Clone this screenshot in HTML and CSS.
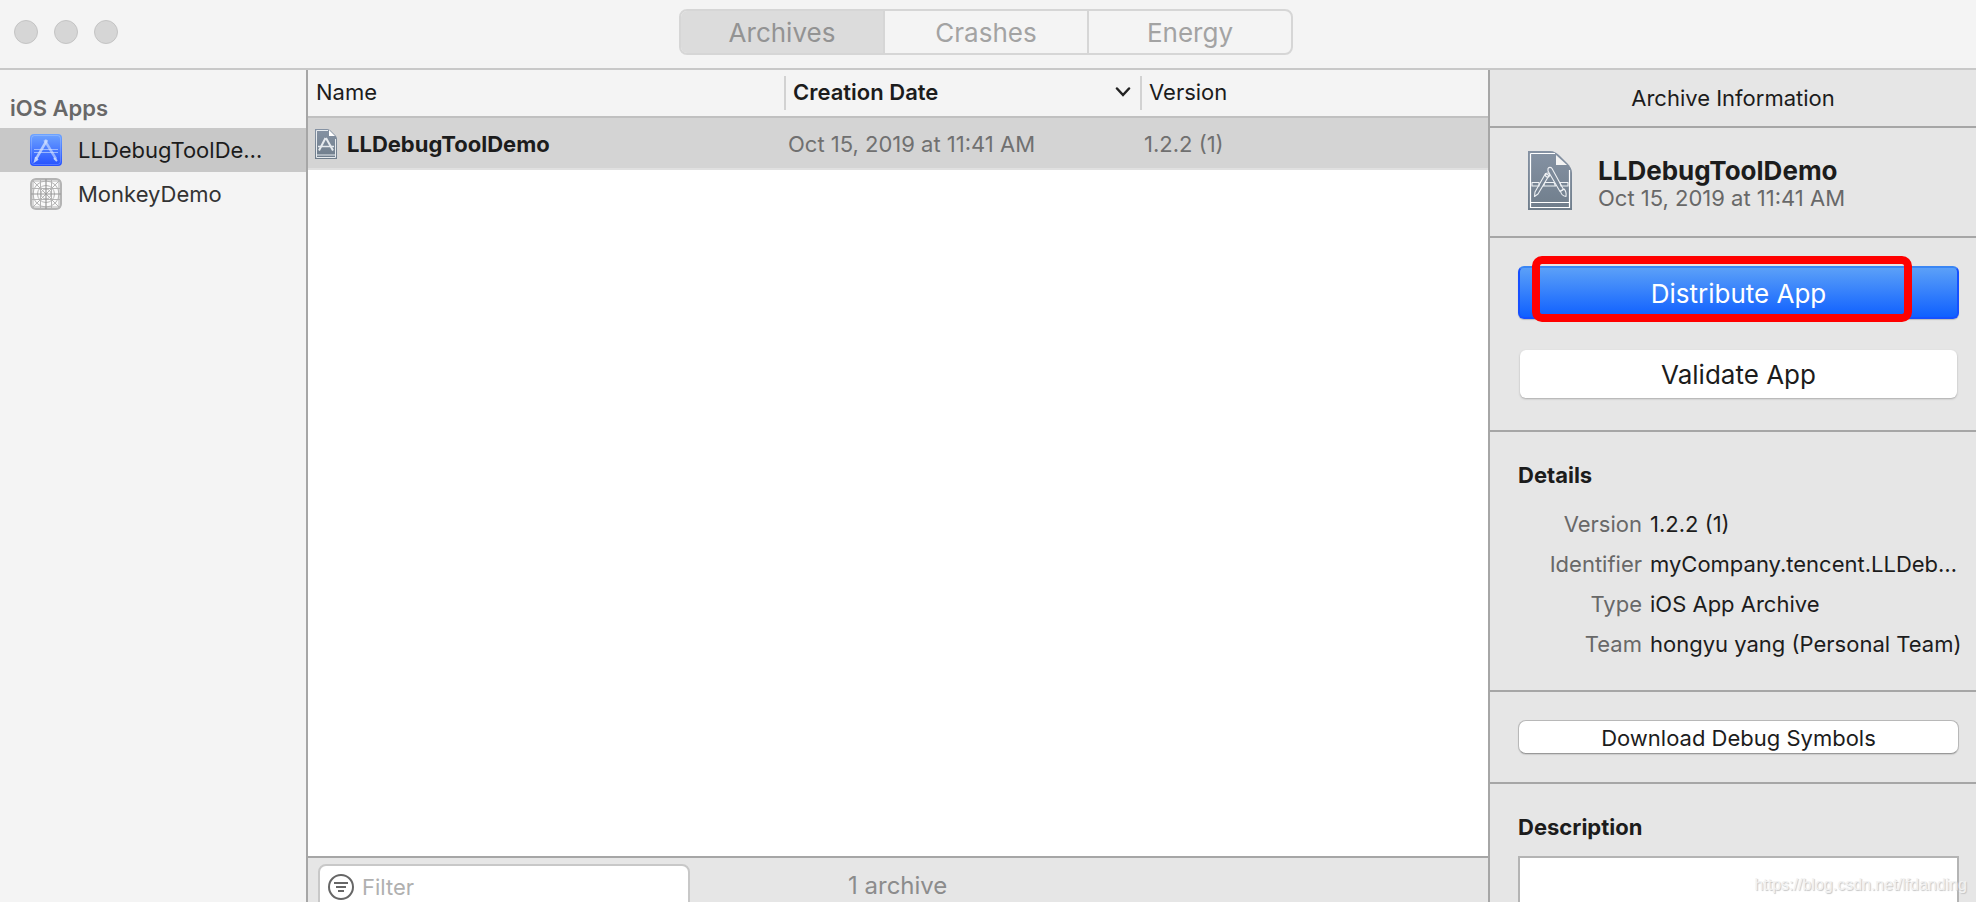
FILE: index.html
```html
<!DOCTYPE html>
<html lang="en">
<head>
    <meta charset="UTF-8">
    <meta name="viewport" content="width=device-width, initial-scale=1.0">
    <title>Archives</title>
    <link rel="stylesheet" href="styles.css">
</head>
<body>

    <!-- shared drawings -->
    <svg class="defs" width="0" height="0" aria-hidden="true">
        <defs>
            <linearGradient id="slate" x1="0" y1="0" x2="0" y2="1">
                <stop offset="0" stop-color="#8592a3"/>
                <stop offset="1" stop-color="#6f7d8b"/>
            </linearGradient>
            <linearGradient id="blue" x1="0" y1="0" x2="0" y2="1">
                <stop offset="0" stop-color="#6ea4ff"/>
                <stop offset="1" stop-color="#2450ff"/>
            </linearGradient>
            <symbol id="archive-doc" viewBox="0 0 44 59">
                <path d="M0 0h22c4 0 7 2 10 5l7 7c3 3 5 6 5 10v37H0z" fill="url(#slate)"/>
                <path d="M2.500 2.500H27M41.500 19v37.500h-39v-54M2.500 51.500h39" fill="none" stroke="#fff" stroke-width="1.200"/>
                <path d="M28 4v10h11z" fill="#f4f4f4"/>
                <g fill="none" stroke="#eef1f4" stroke-width="1.100" stroke-linejoin="round">
                    <path d="M4 31.500h7v3.500H4zM17 31.500h9l1.500 3.500h-12zM32 31.500h8v3.500h-7z"/>
                    <path d="M20 17.500c1-1.500 3-1.500 4 0l11.500 21-3.500 2L20 20z"/>
                    <path d="M17.500 22.500l3.500 2L10 43l-3.500 2.500L7 41z"/>
                    <path d="M32.500 40l3.500-2c2 2 2.500 4 2 7.500-3-.5-5-2-5.500-5.500z"/>
                    <circle cx="19.500" cy="24" r="2"/>
                </g>
            </symbol>
            <symbol id="archive-doc-small" viewBox="0 0 22 30">
                <path d="M0 0h12c2 0 3 1 4 2l4 4c1 1 2 2 2 4v20H0z" fill="url(#slate)"/>
                <path d="M1.500 1.500H13M20.500 10v18.500h-19v-27M1.500 26h19" fill="none" stroke="#e6eaee"/>
                <path d="M14 1v6h6z" fill="#fff"/>
                <g fill="none" stroke="#e6eaee">
                    <path d="M10.500 9L4 21.500M11 9l7 12.500" stroke-width="2"/>
                    <path d="M3 17.500h16" stroke-width="1.500"/>
                </g>
            </symbol>
        </defs>
    </svg>

    <header class="titlebar">
        <div class="lights"><span></span><span></span><span></span></div>
        <nav class="segmented">
            <button type="button" class="active">Archives</button>
            <button type="button">Crashes</button>
            <button type="button">Energy</button>
        </nav>
    </header>

    <div class="window">
        <aside class="sidebar">
            <h2>iOS Apps</h2>
            <ul>
                <li class="selected">
                    <svg width="32" height="32" viewBox="0 0 32 32">
                        <rect width="32" height="32" rx="4" fill="url(#blue)"/>
                        <rect x="1.500" y="1.500" width="29" height="29" rx="3" fill="none" stroke="#fff" stroke-opacity=".2"/>
                        <g fill="none" stroke="#d5e3ff">
                            <path d="M4 15.500h24M4 18.500h24" stroke-opacity=".6"/>
                            <path d="M17 6L6 25" stroke-width="2.500" stroke-opacity=".75"/>
                            <path d="M14.500 6L26 25" stroke-width="2.500" stroke-opacity=".6"/>
                            <path d="M6 23l-1 4 3-2M24 24l3 3" stroke-width="2" stroke-opacity=".8"/>
                        </g>
                    </svg>
                    <span>LLDebugToolDe…</span>
                </li>
                <li>
                    <svg width="32" height="32" viewBox="0 0 32 32">
                        <rect x="1" y="1" width="30" height="30" rx="5" fill="#fafafa" stroke="#b4b4b4" stroke-width="2"/>
                        <g fill="none" stroke="#b4b4b4">
                            <path d="M3 1v30M10.500 1v30M21.500 1v30M29 1v30M1 3h30M1 10.500h30M1 21.500h30M1 29h30"/>
                            <path d="M2 2l28 28M30 2L2 30"/>
                            <circle cx="16" cy="16" r="13"/>
                            <circle cx="16" cy="16" r="8.500"/>
                            <circle cx="16" cy="16" r="5"/>
                            <path d="M16 1v30M1 16h30" stroke="#999" stroke-width="1.200"/>
                        </g>
                    </svg>
                    <span>MonkeyDemo</span>
                </li>
            </ul>
        </aside>

        <main class="content">
            <div class="list">
                <table class="archives">
                    <colgroup>
                        <col class="col-name">
                        <col class="col-date">
                        <col>
                    </colgroup>
                    <thead>
                        <tr>
                            <th>Name</th>
                            <th class="sorted">
                                <div class="sort">
                                    Creation Date
                                    <svg width="16" height="10" viewBox="0 0 16 10"><path d="M2 1.500l6 6.500 6-6.500" fill="none" stroke="#222" stroke-width="2.500" stroke-linecap="round"/></svg>
                                </div>
                            </th>
                            <th>Version</th>
                        </tr>
                    </thead>
                    <tbody>
                        <tr>
                            <td>
                                <div class="name">
                                    <svg width="22" height="30"><use href="#archive-doc-small"/></svg>
                                    LLDebugToolDemo
                                </div>
                            </td>
                            <td>Oct 15, 2019 at 11:41 AM</td>
                            <td>1.2.2 (1)</td>
                        </tr>
                    </tbody>
                </table>
            </div>
            <footer class="bottom-bar">
                <label class="filter">
                    <svg width="26" height="26" viewBox="0 0 26 26"><g fill="none" stroke="#666" stroke-width="2"><circle cx="13" cy="13" r="12"/><path d="M6 9h14M8 13h10M10 17h6"/></g></svg>
                    <input type="text" placeholder="Filter" aria-label="Filter">
                </label>
                <span class="count">1 archive</span>
            </footer>
        </main>

        <aside class="inspector">
            <div class="inspector-title">Archive Information</div>

            <section class="summary">
                <svg width="44" height="59"><use href="#archive-doc"/></svg>
                <div>
                    <h1>LLDebugToolDemo</h1>
                    <p>Oct 15, 2019 at 11:41 AM</p>
                </div>
            </section>

            <section class="actions">
                <button type="button" class="btn primary">Distribute App</button>
                <button type="button" class="btn large">Validate App</button>
                <div class="highlight"></div>
            </section>

            <section class="details">
                <h3>Details</h3>
                <dl>
                    <dt>Version</dt><dd>1.2.2 (1)</dd>
                    <dt>Identifier</dt><dd>myCompany.tencent.LLDeb…</dd>
                    <dt>Type</dt><dd>iOS App Archive</dd>
                    <dt>Team</dt><dd>hongyu yang (Personal Team)</dd>
                </dl>
            </section>

            <section class="symbols">
                <button type="button" class="btn small">Download Debug Symbols</button>
            </section>

            <section class="description">
                <label for="description">Description</label>
                <textarea id="description"></textarea>
            </section>
        </aside>
    </div>

    <div class="watermark">https://blog.csdn.net/lfdanding</div>

</body>
</html>
```

FILE: styles.css
```css
* {
    box-sizing: border-box;
}
body {
    margin: 0;
    height: 100vh;
    display: flex;
    flex-direction: column;
    overflow: hidden;
    font-family: Inter, "Liberation Sans", sans-serif;
    font-size: 22px;
    line-height: 26px;
    color: #1c1c1c;
    background-color: #f4f4f4;
}
h1, h2, h3, p, ul, dl, dd {
    margin: 0;
    padding: 0;
}
button, input, textarea {
    font: inherit;
    color: inherit;
}
svg {
    flex: none;
    display: block;
}
.defs {
    position: absolute;
}

/* title bar */
.titlebar {
    display: grid;
    grid-template-columns: 1fr auto 1fr;
    align-items: start;
    flex: none;
    height: 70px;
    padding: 9px 18px 0 14px;
    border-bottom: 2px solid #c8c8c8;
}
.lights {
    display: flex;
    gap: 16px;
    padding-top: 11px;
}
.lights span {
    width: 24px;
    height: 24px;
    border: 1px solid #c4c4c4;
    border-radius: 50%;
    background-color: #d6d6d6;
}
.segmented {
    display: flex;
    width: 614px;
    height: 46px;
    border: 2px solid #d6d6d6;
    border-radius: 8px;
    overflow: hidden;
}
.segmented button {
    flex: 1;
    padding: 2px 0 0;
    border: 0;
    border-left: 2px solid #d6d6d6;
    background: none;
    font-size: 26px;
    color: #a3a3a3;
}
.segmented button.active {
    border-left: 0;
    background-color: #dcdcdc;
    color: #939393;
}

.window {
    flex: 1;
    display: flex;
    min-height: 0;
}

/* sidebar */
.sidebar {
    flex: none;
    width: 308px;
    padding-top: 25px;
    border-right: 2px solid #a6a6a6;
}
.sidebar h2 {
    padding: 0 10px 7px;
    font-size: 22px;
    font-weight: 600;
    color: #686868;
}
.sidebar ul {
    list-style: none;
}
.sidebar li {
    display: flex;
    align-items: center;
    gap: 16px;
    height: 44px;
    padding-left: 30px;
    color: #333;
}
.sidebar li.selected {
    background-color: #c8c8c8;
    color: #1c1c1c;
}

/* archive list */
.content {
    flex: 1;
    min-width: 0;
    display: flex;
    flex-direction: column;
}
.list {
    flex: 1;
    background-color: #fff;
}
.archives {
    width: 100%;
    table-layout: fixed;
    border-collapse: separate;
    border-spacing: 0;
}
.col-name {
    width: 476px;
}
.col-date {
    width: 356px;
}
.archives th {
    height: 48px;
    padding: 0 9px 2px;
    border-bottom: 2px solid #c0c0c0;
    text-align: left;
    font-weight: 400;
    background: linear-gradient(#d2d2d2, #d2d2d2) 0 6px / 2px 34px no-repeat #f4f4f4;
}
.archives th:first-child {
    padding-left: 8px;
    background: #f4f4f4;
}
.archives th.sorted {
    font-weight: 600;
}
.sort {
    display: flex;
    align-items: center;
    justify-content: space-between;
}
.archives td {
    height: 52px;
    padding: 2px 4px 0;
    border-bottom: 2px solid #e0e0e0;
    background-color: #d4d4d4;
    color: #707070;
}
.name {
    display: flex;
    align-items: center;
    gap: 10px;
    padding-left: 3px;
    font-weight: 700;
    color: #1c1c1c;
}

.bottom-bar {
    display: flex;
    flex: none;
    gap: 158px;
    height: 46px;
    padding: 6px 10px 0;
    border-top: 2px solid #a6a6a6;
    background-color: #e6e6e6;
    overflow: hidden;
}
.filter {
    display: flex;
    align-items: center;
    gap: 8px;
    width: 372px;
    height: 46px;
    padding: 0 8px;
    border: 2px solid #c8c8c8;
    border-radius: 8px;
    background-color: #fff;
}
.filter input {
    width: 100%;
    padding: 0;
    border: 0;
    outline: 0;
    background: none;
}
.filter input::placeholder {
    color: #b0b0b0;
    opacity: 1;
}
.count {
    font-size: 24px;
    line-height: 44px;
    color: #8c8c8c;
}

/* inspector */
.inspector {
    flex: none;
    width: 488px;
    border-left: 2px solid #a6a6a6;
    background-color: #e6e6e6;
    overflow: hidden;
}
.inspector section {
    border-top: 2px solid #a6a6a6;
    padding: 28px 17px 28px 28px;
}
.inspector-title {
    padding: 15px 0;
    text-align: center;
}
.inspector .summary {
    display: flex;
    gap: 26px;
    height: 110px;
    padding: 23px 38px;
}
.summary h1 {
    padding-top: 6px;
    font-size: 26px;
    font-weight: 700;
    line-height: 28px;
}
.summary p {
    line-height: 26px;
    color: #686868;
}
.inspector .actions {
    position: relative;
    height: 194px;
    display: flex;
    flex-direction: column;
    gap: 31px;
}
.btn {
    display: block;
    width: 100%;
    padding: 2px 0 0;
    border: 0;
    border-radius: 6px;
    background-color: #fff;
    cursor: pointer;
}
.btn.primary {
    height: 53px;
    border: 2px solid #1650ff;
    border-top-color: #3a86f4;
    background: linear-gradient(#5ba0f8, #0f60ff);
    box-shadow: 0 1px 1px #bbb;
    font-size: 26px;
    color: #fff;
}
.btn.large {
    width: auto;
    height: 48px;
    margin: 0 2px;
    font-size: 26px;
    box-shadow: 0 1px 2px #aaa;
}
.btn.small {
    height: 34px;
    border: 1px solid #b8b8b8;
    border-bottom-color: #999;
    border-radius: 8px;
    box-shadow: 0 1px 1px #ccc;
}
/* red frame drawn over the button */
.highlight {
    position: absolute;
    top: 18px;
    left: 42px;
    width: 380px;
    height: 66px;
    border: 8px solid #f00;
    border-radius: 10px;
    pointer-events: none;
}
.details h3,
.description label {
    display: block;
    padding-top: 2px;
    font-size: 22px;
    font-weight: 700;
}
.details dl {
    display: grid;
    grid-template-columns: 124px 1fr;
    column-gap: 8px;
    padding-top: 16px;
    line-height: 40px;
    white-space: nowrap;
}
.details dt {
    text-align: right;
    color: #686868;
}
.inspector .details {
    height: 260px;
}
.inspector .symbols {
    height: 92px;
}
.description textarea {
    display: block;
    width: 100%;
    height: 120px;
    margin-top: 16px;
    border: 2px solid #b4b4b4;
    background-color: #fff;
    resize: none;
}

.watermark {
    position: absolute;
    right: 9px;
    bottom: 4px;
    font-family: "Liberation Sans", Arial, sans-serif;
    font-size: 16px;
    color: #f2f2f2;
    text-shadow: 1px 1px 1px #c4c4c4;
}
```
